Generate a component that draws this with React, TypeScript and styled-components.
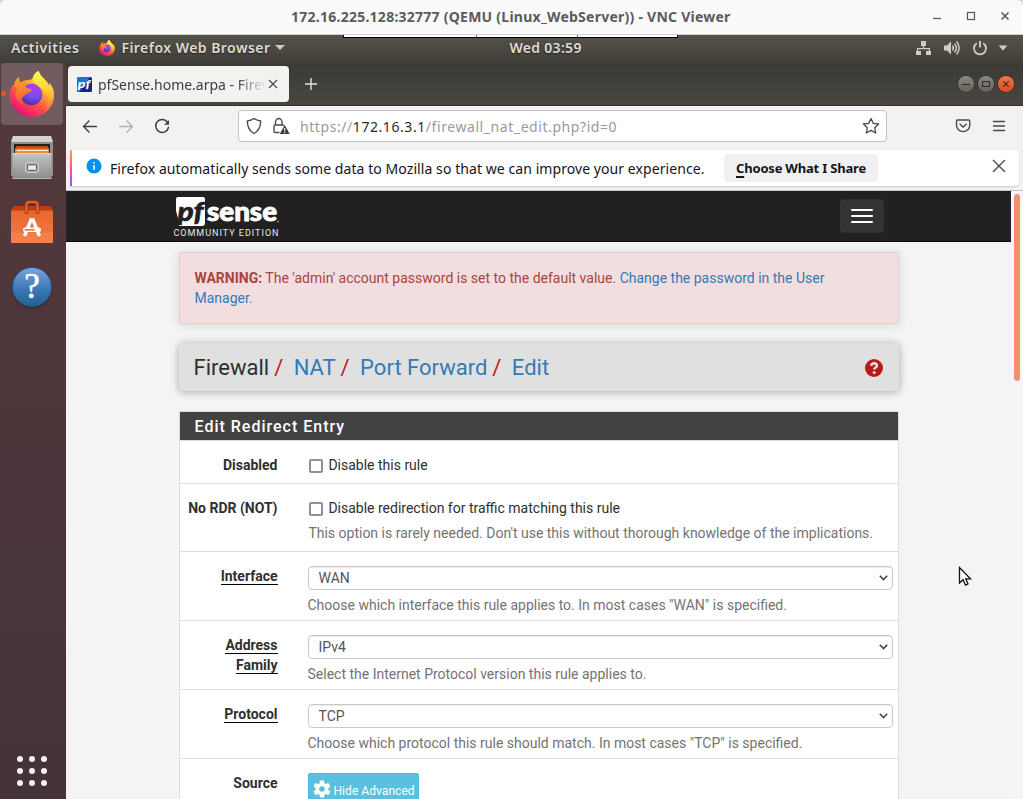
import React from "react";
import styled, { createGlobalStyle } from "styled-components";

const GlobalStyle = createGlobalStyle`
  * { box-sizing: border-box; }
  html, body { margin: 0; padding: 0; }
  body { width: 1023px; height: 799px; overflow: hidden; background: #d8d8d8; font-family: "Noto Sans", "Open Sans", sans-serif; }
  svg { display: block; flex: none; }
`;

const Screen = styled.div`
  width: 1023px;
  height: 799px;
  display: flex;
  flex-direction: column;
  overflow: hidden;
  position: relative;
`;

const Label = styled.span<{ $size: number; $spacing?: number; $weight?: number; $color?: string }>`
  font-size: ${(p) => p.$size}px;
  letter-spacing: ${(p) => p.$spacing ?? 0}px;
  font-weight: ${(p) => p.$weight ?? 400};
  color: ${(p) => p.$color ?? "inherit"};
  white-space: pre;
  line-height: 20px;
`;

/* ---------- viewer window ---------- */

const ViewerTitle = styled.header`
  height: 35px;
  flex: none;
  display: flex;
  align-items: center;
  background: #fafafa;
  border-bottom: 1px solid #d0d0d0;
  border-radius: 6px 6px 0 0;
  padding-left: 291px;
  color: #5b5b5b;
`;

const ViewerButtons = styled.div`
  margin-left: auto;
  margin-right: 13px;
  display: flex;
`;

const ViewerTab = styled.div`
  position: absolute;
  left: 343px;
  top: 35px;
  width: 335px;
  height: 3px;
  border: 1px solid #000;
  border-top: 0;
  background: linear-gradient(90deg, #fff 132px, #666 132px 133px, #fff 133px 233px, #666 233px 234px, #fff 234px);
`;

/* ---------- gnome shell ---------- */

const TopBar = styled.div`
  height: 28px;
  flex: none;
  display: flex;
  align-items: center;
  background: linear-gradient(#55524a, #403e39);
  color: #dfdbd2;
  padding: 0 16px 2px 11px;
  text-shadow: 0 1px 1px rgba(0, 0, 0, 0.5);
`;

const AppMenu = styled.div`
  display: flex;
  align-items: center;
  width: 410px;
  margin-left: 20px;
`;

const AppName = styled.div`
  margin: 0 4px 0 6px;
  display: flex;
`;

const StatusIcons = styled.div`
  margin-left: auto;
`;

const Desktop = styled.div`
  flex: 1;
  display: flex;
  min-height: 0;
`;

const Dock = styled.nav`
  width: 66px;
  flex: none;
  display: flex;
  flex-direction: column;
  background: linear-gradient(#54393c, #4e363a 45%, #43323a);
`;

const DockItem = styled.div<{ $active?: boolean; $height?: number }>`
  width: 62px;
  height: ${(p) => p.$height ?? 65}px;
  margin-left: 1px;
  display: flex;
  align-items: center;
  justify-content: center;
  border-radius: 4px;
  position: relative;
  background: ${(p) => (p.$active ? "rgba(255,255,255,0.18)" : "transparent")};
`;

const RunningDot = styled.i`
  position: absolute;
  left: 0;
  top: 28px;
  width: 5px;
  height: 5px;
  border-radius: 50%;
  background: #e95420;
`;

const AppsGrid = styled.div`
  margin: auto 0 13px 17px;
  display: grid;
  grid-template-columns: repeat(3, 6px);
  gap: 6px;
`;

const AppsDot = styled.i`
  height: 6px;
  border-radius: 50%;
  background: #f2f0f0;
`;

/* ---------- browser ---------- */

const Browser = styled.main`
  flex: 1;
  min-width: 0;
  display: flex;
  flex-direction: column;
  background: #f3f2f1;
`;

const TabStrip = styled.div`
  height: 43px;
  flex: none;
  display: flex;
  align-items: center;
  background: linear-gradient(#3b3934, #494740);
  border-bottom: 1px solid #32302c;
  padding: 0 9px 0 2px;
`;

const Tab = styled.div`
  width: 221px;
  height: 36px;
  margin-right: 16px;
  border-radius: 4px;
  background: #f3f2f1;
  display: flex;
  align-items: center;
  padding-left: 9px;
  color: #3d3d3d;
`;

const TabTitle = styled.div`
  width: 166px;
  margin: 0 4px 0 6px;
  overflow: hidden;
  mask-image: linear-gradient(90deg, #000 138px, transparent 168px);
`;

const WindowButtons = styled.div`
  margin-left: auto;
  display: flex;
  gap: 4px;
`;

const WindowButton = styled.span<{ $close?: boolean }>`
  width: 16px;
  height: 16px;
  border-radius: 50%;
  background: ${(p) => (p.$close ? "linear-gradient(#f4764e,#dc4a1c)" : "linear-gradient(#8a8880,#63615b)")};
  box-shadow: 0 0 0 1px rgba(45, 43, 38, 0.5);
`;

const Toolbar = styled.div`
  height: 44px;
  flex: none;
  display: flex;
  align-items: center;
  padding: 0 17px 4px 16px;
`;

const NavIcons = styled.div`
  width: 156px;
`;

const AddressBar = styled.div`
  width: 649px;
  height: 32px;
  border: 1px solid #c2c1c0;
  border-radius: 4px;
  background: #fff;
  display: flex;
  align-items: center;
  padding-left: 7px;
`;

const AddressText = styled.div`
  width: 562px;
  margin-left: 9px;
  color: #9a9a9a;
`;

const ToolbarEnd = styled.div`
  margin-left: auto;
`;

const Notice = styled.div`
  width: 949px;
  height: 36px;
  flex: none;
  margin-left: 4px;
  display: flex;
  align-items: center;
  background: #fff;
  border-radius: 0 4px 4px 0;
  box-shadow: 0 1px 2px rgba(0, 0, 0, 0.16);
  color: #15141a;
`;

const NoticeStripe = styled.i`
  width: 2px;
  height: 36px;
  background: linear-gradient(#ffa436, #f5588a 50%, #9059ff);
`;

const NoticeIcon = styled.div`
  margin: -4px 0 0 14px;
`;

const NoticeClose = styled.div`
  margin: -4px 0 0 114px;
`;

const NoticeText = styled.div`
  width: 614px;
  margin-left: 8px;
`;

const NoticeButton = styled.button`
  width: 154px;
  height: 28px;
  border: 0;
  border-radius: 4px;
  padding: 0;
  background: #f0f0f2;
  color: #15141a;
  font-family: inherit;
  u { text-decoration-thickness: 2px; text-underline-offset: 3px; }
`;

const Viewport = styled.div`
  flex: 1;
  min-height: 0;
  margin-top: 4px;
  display: flex;
  border-top: 1px solid #c4c4c0;
`;

const ScrollTrack = styled.div`
  width: 12px;
  flex: none;
  padding: 3px 3px;
  background: #f6f5f5;
`;

const ScrollThumb = styled.div`
  width: 6px;
  height: 187px;
  border-radius: 3px;
  background: #f29271;
`;

/* ---------- pfSense page ---------- */

const Page = styled.div`
  flex: 1;
  min-width: 0;
  overflow: hidden;
  background: #f4f4f4;
  font-family: Roboto, sans-serif;
  font-size: 14px;
  line-height: 20px;
  color: #2f2f2f;
`;

const SiteNav = styled.div`
  height: 51px;
  background: #212121;
  border-bottom: 1px solid #080808;
  display: flex;
  padding: 6px 127px 0 107px;
`;

const MenuToggle = styled.div`
  width: 44px;
  height: 34px;
  margin: 2px 0 0 auto;
  border-radius: 4px;
  background: #333;
  padding: 10px 11px;
  display: flex;
  flex-direction: column;
  gap: 4px;
`;

const MenuLine = styled.i`
  height: 2px;
  border-radius: 1px;
  background: #fff;
`;

const Container = styled.div`
  width: 720px;
  margin-left: 113px;
`;

const Link = styled.a`
  color: #337ab7;
`;

const Alert = styled.div`
  margin-top: 10px;
  height: 72px;
  padding: 15px 15px 15px 14.5px;
  border: 1px solid #ebccd1;
  background: #f2dede;
  color: #a94442;
  box-shadow: 0 1px 10px rgba(0, 0, 0, 0.12);
`;

const Crumbs = styled.div`
  height: 48px;
  margin-top: 19px;
  padding: 2px 16px 0 14.5px;
  display: flex;
  align-items: center;
  background: #e0e0e0;
  border-radius: 4px;
  box-shadow: 0 1px 8px rgba(0, 0, 0, 0.32);
  font-size: 22px;
  line-height: 24px;
`;

const Slash = styled.span`
  color: #c4161c;
  width: 24.5px;
  padding-left: 5px;
`;

const HelpBadge = styled.div`
  margin-left: auto;
`;

const Panel = styled.section`
  margin-top: 20px;
  border: 1px solid #ddd;
  background: #fff;
`;

const PanelHeading = styled.h2`
  height: 29px;
  margin: 0;
  padding: 5px 14.5px 0;
  font-size: 16px;
  font-weight: 500;
  letter-spacing: 1px;
  color: #fff;
  background: #424242;
  border-bottom: 1px solid #ddd;
`;

const FormRow = styled.div<{ $height: number }>`
  height: ${(p) => p.$height}px;
  display: grid;
  grid-template-columns: 97.5px 585px;
  column-gap: 30.5px;
  padding-top: 14px;
  border-bottom: 1px solid #ddd;
`;

const FieldName = styled.div`
  text-align: right;
  font-weight: 700;
  white-space: nowrap;
`;

const Required = styled.span`
  border-bottom: 1px solid #000;
`;

const CheckLine = styled.label`
  display: flex;
  align-items: center;
  height: 20px;
  padding-left: 1px;
`;

const Box = styled.i`
  width: 14px;
  height: 14px;
  margin: 2px 5.4px 0 0;
  border: 2px solid #8f8f9d;
  border-radius: 2px;
  background: #fff;
`;

const Help = styled.div<{ $shift?: number }>`
  margin-top: 5px;
  margin-left: ${(p) => p.$shift ?? -0.5}px;
  color: #737373;
  white-space: nowrap;
`;

const Select = styled.div`
  height: 24px;
  display: flex;
  align-items: center;
  justify-content: space-between;
  padding: 0 4px 0 9.5px;
  border: 1px solid #c8c8c8;
  border-radius: 4px;
  box-shadow: inset 0 1px 1px rgba(0, 0, 0, 0.075);
  color: #555;
`;

const AdvancedButton = styled.div`
  width: 111px;
  height: 34px;
  display: flex;
  align-items: flex-start;
  gap: 3px;
  padding: 6px 3.5px;
  border: 1px solid #46b8da;
  border-radius: 2px;
  background: #5bc0de;
  color: #fff;
  font-size: 12px;
  white-space: nowrap;
  span { padding-top: 1px; letter-spacing: 0.05px; }
`;

const Pointer = styled.div`
  position: absolute;
  left: 958px;
  top: 566px;
`;

/* ---------- drawings ---------- */

function FirefoxIcon({ size, id }: { size: number; id: string }) {
  return (
    <svg width={size} height={size} viewBox="0 0 92 94">
      <defs>
        <linearGradient id={`${id}b`} x1="0.8" y1="0.1" x2="0.25" y2="0.95">
          <stop offset="0" stopColor="#fff44f" />
          <stop offset="0.35" stopColor="#ffa22b" />
          <stop offset="0.65" stopColor="#ff4a4b" />
          <stop offset="1" stopColor="#e5127a" />
        </linearGradient>
        <linearGradient id={`${id}y`} x1="0.4" y1="0" x2="0.6" y2="1">
          <stop offset="0" stopColor="#fff44f" />
          <stop offset="0.5" stopColor="#ffd03a" />
          <stop offset="1" stopColor="#ff8a30" stopOpacity="0.1" />
        </linearGradient>
        <radialGradient id={`${id}p`} cx="0.65" cy="0.2" r="0.9">
          <stop offset="0" stopColor="#b23bf2" />
          <stop offset="0.5" stopColor="#7a4cf0" />
          <stop offset="1" stopColor="#45278d" />
        </radialGradient>
        <linearGradient id={`${id}o`} x1="0" y1="0" x2="0" y2="1">
          <stop offset="0" stopColor="#ffa520" />
          <stop offset="0.6" stopColor="#ff7a2c" />
          <stop offset="1" stopColor="#ff5a3c" stopOpacity="0.3" />
        </linearGradient>
      </defs>
      <path
        d="M10 27C11 21 15 15 20 13C19 18 20 22 22 24C27 20 32 19 38 19C40 18 44 17 47 17C48 9 54 2 60 0C62 10 70 14 76 22C78 23 80 29 81 31C82 29 82 27 81 24C88 32 92 42 91 51C90 75 71 94 46 94C21 94 1 75 0 50C0 41 4 33 8 28Z"
        fill={`url(#${id}b)`}
      />
      <path
        d="M60 0C62 10 70 14 76 22C78 23 80 29 81 31C82 29 82 27 81 24C88 32 92 42 91 51C90 64 83 76 73 83C82 68 78 48 68 38C60 31 50 26 47 17C48 9 54 2 60 0Z"
        fill={`url(#${id}y)`}
      />
      <circle cx="45" cy="48" r="22" fill={`url(#${id}p)`} />
      <path
        d="M10 27C11 21 15 15 20 13C19 18 20 22 22 24C27 20 33 20 38 22C34 25 32 29 33 32C38 37 44 36 46 38C45 43 39 44 36 46C31 48 31 52 27 54C24 61 28 68 36 72C24 72 14 62 12 50C12 42 15 39 18 37C14 35 10 32 10 27Z"
        fill={`url(#${id}o)`}
        opacity="0.9"
      />
    </svg>
  );
}

function ViewerGlyphs() {
  return (
    <svg width="80" height="16" viewBox="0 0 80 16" fill="none" stroke="#555" strokeWidth="1.200">
      <path d="M3 9.500H11" />
      <rect x="37.500" y="3.500" width="7" height="7" />
      <path d="M71.500 3.500L78.500 10.500M78.500 3.500L71.500 10.500" strokeWidth="1.500" />
    </svg>
  );
}

function StatusGlyphs() {
  return (
    <svg width="91" height="18" viewBox="0 0 91 18" fill="#d0ccc4">
      <path d="M5 2h5v5H8.100v2H14v3h1v4h-5v-4h2.800v-1.800H2.200V12H5v4H0v-4h1V9h5.900V7H5z" />
      <path d="M28 6.500h3l4-4v13l-4-4h-3z" />
      <g fill="none" stroke="#d0ccc4" strokeWidth="1.500">
        <path d="M36.500 6.500Q38.300 9 36.500 11.500M38.600 4.600Q42 9 38.600 13.400M40.600 2.500Q45.600 9 40.600 15.500" />
        <path d="M60.800 4.300A6 6 0 1 0 67.200 4.300M64 2V8.500" strokeWidth="1.900" />
      </g>
      <path d="M82.500 6.500h9l-4.500 5z" />
    </svg>
  );
}

function FilesIcon() {
  return (
    <svg width="44" height="46" viewBox="0 0 44 46">
      <defs>
        <linearGradient id="cab" x1="0" y1="0" x2="0" y2="1">
          <stop offset="0" stopColor="#c4c4c2" />
          <stop offset="1" stopColor="#8c8c8a" />
        </linearGradient>
      </defs>
      <path d="M3 1H41L43 8V41H1V8Z" fill="#8e8e8c" />
      <path d="M3 1H41L43 7H1Z" fill="#d4d4d2" />
      <path d="M4 9H40V20H4Z" fill="#25201e" />
      <path d="M6 11H38V14H6Z" fill="#c14a14" />
      <path d="M5 13.500H39V19H5Z" fill="#f08a3a" />
      <path d="M7 15.500H38" stroke="#fff1dd" />
      <path d="M2.500 18H41.500V44H2.500Z" fill="url(#cab)" />
      <path d="M2.500 18.500H41.500" stroke="#d6d6d4" />
      <path d="M2.500 43.500H41.500" stroke="#b4b4b2" />
      <rect x="15.500" y="27.500" width="13" height="10" rx="2" fill="#aaa" stroke="#cfcfcf" />
      <rect x="17.500" y="29.800" width="9" height="5.500" rx="1" fill="#e9e9e9" stroke="#555" />
    </svg>
  );
}

function SoftwareIcon() {
  return (
    <svg width="42" height="44" viewBox="0 0 42 44">
      <defs>
        <linearGradient id="bag" x1="0" y1="0" x2="0" y2="1">
          <stop offset="0" stopColor="#e8662e" />
          <stop offset="1" stopColor="#f37d4a" />
        </linearGradient>
      </defs>
      <path d="M2 6H40L42 12H0Z" fill="#b8400f" />
      <path d="M0 10.500H42V43H0Z" fill="url(#bag)" />
      <path d="M0 33H42V43H0Z" fill="#f5864f" opacity="0.6" />
      <path d="M15.500 14V5Q15.500 2 18.500 2H23.500Q26.500 2 26.500 5V14" fill="none" stroke="#9e350c" strokeWidth="3.600" />
      <path d="M15.500 13.500V5Q15.500 2 18.500 2H23.500Q26.500 2 26.500 5V13.500" fill="none" stroke="#e8602c" strokeWidth="2.200" />
      <path d="M20.600 18.500L13.500 36M21.400 18.500L28.500 36" fill="none" stroke="#fff" strokeWidth="3.400" />
      <rect x="12" y="27.500" width="18" height="4.600" rx="2" fill="#fff" />
      <rect x="13.500" y="29" width="10" height="1.700" fill="#ec7a42" />
    </svg>
  );
}

const HelpDisc = styled.div`
  width: 40px;
  height: 40px;
  border-radius: 50%;
  background: linear-gradient(#7aa5da, #3d78b8 55%, #22618f);
  border: 1px solid #27598c;
  box-shadow: 0 1px 2px rgba(0, 0, 0, 0.4);
  color: #fff;
  font: 400 35px/38px "Liberation Serif", serif;
  -webkit-text-stroke: 0.5px #fff;
  text-align: center;
`;

function PfFavicon() {
  return (
    <svg width="15" height="15" viewBox="0 0 15 15">
      <rect width="15" height="15" rx="1.500" fill="#1a1f80" />
      <path d="M1.500 0H13L3 14V15H1.500Q0 15 0 13.500V1.500Q0 0 1.500 0Z" fill="#1976d2" />
      <text x="0.800" y="11" fontFamily="Lato" fontSize="12" fontWeight="900" fontStyle="italic" fill="#fff" textLength="12.500" lengthAdjust="spacingAndGlyphs">
        pf
      </text>
    </svg>
  );
}

function WindowGlyph({ d }: { d: string }) {
  return (
    <svg width="16" height="16" viewBox="0 0 16 16" fill="none" stroke="#32302c" strokeWidth="1.200">
      <path d={d} />
    </svg>
  );
}

function NavGlyphs() {
  return (
    <svg width="100" height="20" viewBox="0 0 100 20" fill="none" stroke="#3d3d3d" strokeWidth="1.400" strokeLinecap="round" strokeLinejoin="round">
      <path d="M14.500 10.500H1.500M7 5L1.500 10.500L7 16" />
      <path d="M37.500 10.500H50.500M45 5L50.500 10.500L45 16" stroke="#b0afae" />
      <path d="M85.700 6.500A6.500 6.500 0 1 0 86.500 11.500" strokeWidth="1.500" />
      <path d="M87 4V8.800H82.200Z" fill="#3d3d3d" stroke="none" />
    </svg>
  );
}

function SecurityGlyphs() {
  return (
    <svg width="45" height="18" viewBox="0 0 45 18" fill="none" stroke="#4a4a4a" strokeWidth="1.400">
      <path d="M8 1.500C10 3 12 3.700 14.700 4C14.700 10 12.500 14 8 16.500C3.500 14 1.300 10 1.300 4C4 3.700 6 3 8 1.500Z" strokeLinejoin="round" />
      <path d="M33.500 15.500H29Q28 15.500 28 14.500V9Q28 8 29 8H36.500Q37.500 8 37.500 9M29.500 8V5.200A3.200 3.600 0 0 1 36 5.200V8" />
      <path d="M38.700 8L43.700 17H33.700Z" fill="#3d3d3d" stroke="none" />
      <path d="M38.700 11V13.800M38.700 14.800V15.900" stroke="#fff" strokeWidth="1.200" />
    </svg>
  );
}

function CogIcon() {
  const teeth = [0, 60, 120];
  return (
    <svg width="18" height="18" viewBox="0 0 18 18">
      <circle cx="9" cy="9" r="6.300" fill="#fff" />
      {teeth.map((a) => (
        <rect key={a} x="6.700" y="0.400" width="4.600" height="17.200" rx="1" fill="#fff" transform={`rotate(${a} 9 9)`} />
      ))}
      <circle cx="9" cy="9" r="2.800" fill="#5bc0de" />
    </svg>
  );
}

function PfLogo() {
  return (
    <svg width="110" height="44" viewBox="0 0 110 44">
      <path d="M5 0H30Q32 0 32 2V26Q32 29 29 29H6V25L3 14V2Q3 0 5 0Z" fill="#fff" />
      <text x="4.500" y="23.500" fontFamily="Lato" fontWeight="900" fontStyle="italic" fontSize="26" fill="#212121" stroke="#212121" strokeWidth="0.500" textLength="26" lengthAdjust="spacingAndGlyphs">
        pf
      </text>
      <text x="34" y="24.200" fontFamily="Lato" fontWeight="900" fontSize="27" fill="#fff" stroke="#fff" strokeWidth="0.900" textLength="70" lengthAdjust="spacingAndGlyphs">
        sense
      </text>
      <circle cx="105" cy="24.500" r="1" fill="#888" />
      <text x="0.500" y="39" fontFamily="Roboto" fontSize="9" fill="#e8e8e8" textLength="105">
        COMMUNITY EDITION
      </text>
    </svg>
  );
}

const selects = [
  { name: ["Interface"], value: "WAN", help: 'Choose which interface this rule applies to. In most cases "WAN" is specified.' },
  { name: ["Address", "Family"], value: "IPv4", help: "Select the Internet Protocol version this rule applies to." },
  { name: ["Protocol"], value: "TCP", help: 'Choose which protocol this rule should match. In most cases "TCP" is specified.' },
];

export default function App() {
  return (
    <Screen>
      <GlobalStyle />
      <ViewerTitle>
        <Label $size={14} $weight={700} $spacing={0.25}>172.16.225.128:32777 (QEMU (Linux_WebServer)) - VNC Viewer</Label>
        <ViewerButtons>
          <ViewerGlyphs />
        </ViewerButtons>
      </ViewerTitle>
      <ViewerTab />
      <TopBar>
        <Label $size={14} $weight={600} $spacing={0.6}>Activities</Label>
        <AppMenu>
          <FirefoxIcon size={16} id="fs" />
          <AppName>
            <Label $size={14} $weight={600} $spacing={0.46}>Firefox Web Browser</Label>
          </AppName>
          <svg width="10" height="6" viewBox="0 0 10 6">
            <path d="M0 0H10L5 5Z" fill="#cfcbc3" />
          </svg>
        </AppMenu>
        <Label $size={14} $weight={600} $spacing={0.3}>Wed 03:59</Label>
        <StatusIcons>
          <StatusGlyphs />
        </StatusIcons>
      </TopBar>
      <Desktop>
        <Dock>
          <DockItem $active $height={62}>
            <RunningDot />
            <FirefoxIcon size={46} id="fl" />
          </DockItem>
          <DockItem $height={66}><FilesIcon /></DockItem>
          <DockItem $height={62}><SoftwareIcon /></DockItem>
          <DockItem $height={68}><HelpDisc>?</HelpDisc></DockItem>
          <AppsGrid>
            {Array.from({ length: 9 }, (_, i) => <AppsDot key={i} />)}
          </AppsGrid>
        </Dock>
        <Browser>
          <TabStrip>
            <Tab>
              <PfFavicon />
              <TabTitle><Label $size={14}>pfSense.home.arpa - Firewall</Label></TabTitle>
              <svg width="10" height="10" viewBox="0 0 10 10" stroke="#4a4a4a" strokeWidth="1.200">
                <path d="M1 1L9 9M9 1L1 9" />
              </svg>
            </Tab>
            <svg width="12" height="12" viewBox="0 0 12 12" stroke="#e4e2dd" strokeWidth="1.400">
              <path d="M6 0V12M0 6H12" />
            </svg>
            <WindowButtons>
              <WindowButton><WindowGlyph d="M4 8.500H12" /></WindowButton>
              <WindowButton><WindowGlyph d="M4.500 5.500H11.500V10.500H4.500Z" /></WindowButton>
              <WindowButton $close><WindowGlyph d="M5.300 5.300L10.700 10.700M10.700 5.300L5.300 10.700" /></WindowButton>
            </WindowButtons>
          </TabStrip>
          <Toolbar>
            <NavIcons><NavGlyphs /></NavIcons>
            <AddressBar>
              <SecurityGlyphs />
              <AddressText>
                <Label $size={14} $spacing={0.57}>https://</Label>
                <Label $size={14} $spacing={0.57} $color="#2b2b2b">172.16.3.1</Label>
                <Label $size={14} $spacing={0.57}>/firewall_nat_edit.php?id=0</Label>
              </AddressText>
              <svg width="18" height="18" viewBox="0 0 18 18" fill="none" stroke="#4a4a4a" strokeWidth="1.300" strokeLinejoin="round">
                <path d="M9 1.500L11.300 6.400L16.600 7L12.700 10.700L13.700 16L9 13.400L4.300 16L5.300 10.700L1.400 7L6.700 6.400Z" />
              </svg>
            </AddressBar>
            <ToolbarEnd>
              <svg width="52" height="16" viewBox="0 0 52 16" fill="none" stroke="#4a4a4a" strokeWidth="1.400" strokeLinecap="round">
                <path d="M3.500 2H14.500Q15.800 2 15.800 3.300V7A6.300 6.300 0 0 1 2.500 7V3.300Q2.500 2 3.500 2ZM6 6.200L9.100 9L12.300 6.200" />
                <path d="M39.500 3.500H50.500M39.500 8H50.500M39.500 12.500H50.500" />
              </svg>
            </ToolbarEnd>
          </Toolbar>
          <Notice>
            <NoticeStripe />
            <NoticeIcon>
              <svg width="16" height="16" viewBox="0 0 16 16">
                <circle cx="8" cy="8" r="7.500" fill="#0090ed" />
                <path d="M8 4V5.600M8 7V12" stroke="#fff" strokeWidth="1.500" />
              </svg>
            </NoticeIcon>
            <NoticeText>
              <Label $size={14} $spacing={0.07}>Firefox automatically sends some data to Mozilla so that we can improve your experience.</Label>
            </NoticeText>
            <NoticeButton>
              <Label $size={13} $weight={700} $spacing={-0.2}><u>C</u>hoose What I Share</Label>
            </NoticeButton>
            <NoticeClose>
              <svg width="14" height="14" viewBox="0 0 14 14" stroke="#4a4a4f" strokeWidth="1.400">
                <path d="M1 1L13 13M13 1L1 13" />
              </svg>
            </NoticeClose>
          </Notice>
          <Viewport>
            <Page>
              <SiteNav>
                <PfLogo />
                <MenuToggle>
                  <MenuLine />
                  <MenuLine />
                  <MenuLine />
                </MenuToggle>
              </SiteNav>
              <Container>
                <Alert>
                  <b>WARNING:</b> The 'admin' account password is set to the default value. <Link>Change the password in the User Manager.</Link>
                </Alert>
                <Crumbs>
                  <span>Firewall</span>
                  <Slash>/</Slash>
                  <Link>NAT</Link>
                  <Slash>/</Slash>
                  <Link>Port Forward</Link>
                  <Slash>/</Slash>
                  <Link>Edit</Link>
                  <HelpBadge>
                    <svg width="18" height="18" viewBox="0 0 18 18">
                      <circle cx="9" cy="9" r="9" fill="#b71c1c" />
                      <path d="M6.200 6.800Q6.500 4.300 9.100 4.300Q11.900 4.400 11.900 6.700Q11.900 7.900 10.300 8.800Q9.200 9.400 9.200 10.600" fill="none" stroke="#e0e0e0" strokeWidth="2.400" />
                      <circle cx="9.200" cy="13.500" r="1.500" fill="#e0e0e0" />
                    </svg>
                  </HelpBadge>
                </Crumbs>
                <Panel>
                  <PanelHeading>Edit Redirect Entry</PanelHeading>
                  <FormRow $height={43}>
                    <FieldName>Disabled</FieldName>
                    <CheckLine><Box />Disable this rule</CheckLine>
                  </FormRow>
                  <FormRow $height={68}>
                    <FieldName>No RDR (NOT)</FieldName>
                    <div>
                      <CheckLine><Box />Disable redirection for traffic matching this rule</CheckLine>
                      <Help $shift={0.4}>This option is rarely needed. Don't use this without thorough knowledge of the implications.</Help>
                    </div>
                  </FormRow>
                  {selects.map((s) => (
                    <FormRow key={s.value} $height={69}>
                      <FieldName>
                        {s.name.map((n) => <div key={n}><Required>{n}</Required></div>)}
                      </FieldName>
                      <div>
                        <Select>
                          {s.value}
                          <svg width="9" height="6" viewBox="0 0 9 6" fill="none" stroke="#444" strokeWidth="1.600">
                            <path d="M0.800 0.800L4.500 4.500L8.200 0.800" />
                          </svg>
                        </Select>
                        <Help>{s.help}</Help>
                      </div>
                    </FormRow>
                  ))}
                  <FormRow $height={69}>
                    <FieldName>Source</FieldName>
                    <AdvancedButton>
                      <CogIcon />
                      <span>Hide Advanced</span>
                    </AdvancedButton>
                  </FormRow>
                </Panel>
              </Container>
            </Page>
            <ScrollTrack>
              <ScrollThumb />
            </ScrollTrack>
          </Viewport>
        </Browser>
      </Desktop>
      <Pointer>
        <svg width="15" height="22" viewBox="0 0 15 22">
          <path d="M1.500 1.500V17L5 13.700L7.500 19.200L10 18L7.700 12.800H12.500Z" fill="#fff" stroke="#111" strokeWidth="1.300" />
        </svg>
      </Pointer>
    </Screen>
  );
}
